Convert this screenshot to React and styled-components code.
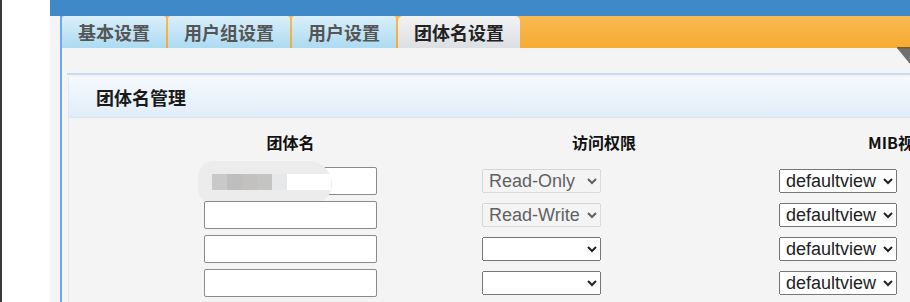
import React from 'react';
import styled, { createGlobalStyle } from 'styled-components';

const cjk = `"Noto Sans CJK SC", "Liberation Sans", sans-serif`;

const GlobalStyle = createGlobalStyle`
  html, body {
    margin: 0;
    padding: 0;
    background: #fff;
    overflow: hidden;
  }
  body {
    font-family: ${cjk};
  }
`;

const Page = styled.div`
  display: flex;
  width: 910px;
  height: 302px;
  overflow: hidden;
`;

const Gutter = styled.div`
  width: 48px;
  flex: 0 0 48px;
  background: #fff;
  border-left: 2px solid #3a3a3a;
`;

const Main = styled.div`
  flex: 1;
  display: flex;
  flex-direction: column;
  background: #f4f4f4;
  min-width: 0;
`;

const TopBar = styled.div`
  height: 16px;
  background: #3f89c8;
`;

const Frame = styled.div`
  position: relative;
  flex: 1;
  margin-left: 10px;
  border-left: 2px solid #6aa9ee;
  display: flex;
  flex-direction: column;
`;

const TabBar = styled.div`
  display: flex;
  gap: 2px;
  height: 32px;
  background: linear-gradient(#f9b953, #f6ab31);
`;

const Tab = styled.div`
  display: flex;
  align-items: center;
  padding: 0 16px;
  border-radius: ${(p) => (p.$active ? '5px 5px 0 0' : '3px 3px 0 0')};
  background: ${(p) =>
    p.$active
      ? 'linear-gradient(#f2f2f2, #dcdfe3)'
      : 'linear-gradient(#daeffa, #acdbf1)'};
  color: ${(p) => (p.$active ? '#222' : '#555')};
  font-size: 18px;
  font-weight: 700;
  white-space: nowrap;
`;

const CornerMark = styled.svg`
  position: absolute;
  right: 0;
  top: 31px;
`;

const Content = styled.div`
  flex: 1;
  padding: 25px 0 0 5px;
`;

const Section = styled.div`
  border-top: 2px solid #c9dcef;
  padding: 2px 0 0 1px;
  height: 100%;
`;

const Panel = styled.div`
  border-left: 1px solid #dfe7f1;
  height: 100%;
`;

const PanelHeader = styled.div`
  height: 40px;
  display: flex;
  align-items: center;
  padding-left: 27px;
  background: linear-gradient(#f6f9fe, #e1ecf8);
  border-bottom: 1px solid #d9e4f0;
  font-size: 18px;
  font-weight: 700;
  color: #1a1a1a;
`;

const Table = styled.div`
  display: grid;
  grid-template-columns: 278px 297px 240px;
  row-gap: 6px;
  padding: 14px 0 0 135px;
`;

const HeadCell = styled.div`
  width: ${(p) => p.$w}px;
  height: 20px;
  line-height: 20px;
  text-align: center;
  font-size: 16px;
  font-weight: 700;
  color: #111;
  white-space: nowrap;
  margin-bottom: 9px;
`;

const Cell = styled.div`
  position: relative;
  height: 28px;
  display: flex;
  align-items: center;
`;

const TextInput = styled.input`
  box-sizing: border-box;
  width: 173px;
  height: 28px;
  border: 1px solid #8a8a8a;
  border-radius: 2px;
  background: #fff;
  padding: 0 4px;
  font: 16px "Liberation Sans", sans-serif;
`;

const Select = styled.select`
  box-sizing: border-box;
  width: ${(p) => p.$w}px;
  height: 24px;
  padding: 0 0 0 2px;
  font: 18px "Liberation Sans", sans-serif;
  color: #222;
`;

const Blur = styled.div`
  position: absolute;
  left: -6px;
  top: -6px;
  width: 134px;
  height: 42px;
  border-radius: 20px 30px 24px 18px;
  background: #ececec;
  display: flex;
  align-items: center;
  padding-left: 14px;
  box-sizing: border-box;
`;

const Pixel = styled.span`
  display: block;
  width: ${(p) => p.$w}px;
  height: 16px;
  background: ${(p) => p.$c};
`;

const rows = [
  { access: 'Read-Only', disabled: true },
  { access: 'Read-Write', disabled: true },
  { access: '', disabled: false },
  { access: '', disabled: false },
];

function App() {
  return (
    <>
      <GlobalStyle />
      <Page>
        <Gutter />
        <Main>
          <TopBar />
          <Frame>
            <TabBar>
              <Tab>基本设置</Tab>
              <Tab>用户组设置</Tab>
              <Tab>用户设置</Tab>
              <Tab $active>团体名设置</Tab>
            </TabBar>
            <CornerMark width="13" height="17" viewBox="0 0 13 17">
              <polygon points="0,1 13,1 13,17" fill="#707070" />
              <rect x="0" y="0" width="13" height="1.5" fill="#7a5a28" />
            </CornerMark>
            <Content>
              <Section>
                <Panel>
                  <PanelHeader>团体名管理</PanelHeader>
                  <Table>
                    <HeadCell $w={173}>团体名</HeadCell>
                    <HeadCell $w={244}>访问权限</HeadCell>
                    <HeadCell $w={240}>MIB视图</HeadCell>
                    {rows.map((r, i) => (
                      <React.Fragment key={i}>
                        <Cell>
                          <TextInput type="text" />
                          {i === 0 && (
                            <Blur>
                              <Pixel $w={15} $c="#c9c9c9" />
                              <Pixel $w={15} $c="#bebebe" />
                              <Pixel $w={15} $c="#c2c1bf" />
                              <Pixel $w={15} $c="#c4c4c2" />
                              <Pixel $w={15} $c="#e6e8ea" />
                              <Pixel $w={44} $c="#fff" />
                            </Blur>
                          )}
                        </Cell>
                        <Cell>
                          <Select $w={119} disabled={r.disabled} defaultValue={r.access}>
                            <option value="">{''}</option>
                            <option value="Read-Only">Read-Only</option>
                            <option value="Read-Write">Read-Write</option>
                          </Select>
                        </Cell>
                        <Cell>
                          <Select $w={118} defaultValue="defaultview">
                            <option value="defaultview">defaultview</option>
                          </Select>
                        </Cell>
                      </React.Fragment>
                    ))}
                  </Table>
                </Panel>
              </Section>
            </Content>
          </Frame>
        </Main>
      </Page>
    </>
  );
}

export default App;
